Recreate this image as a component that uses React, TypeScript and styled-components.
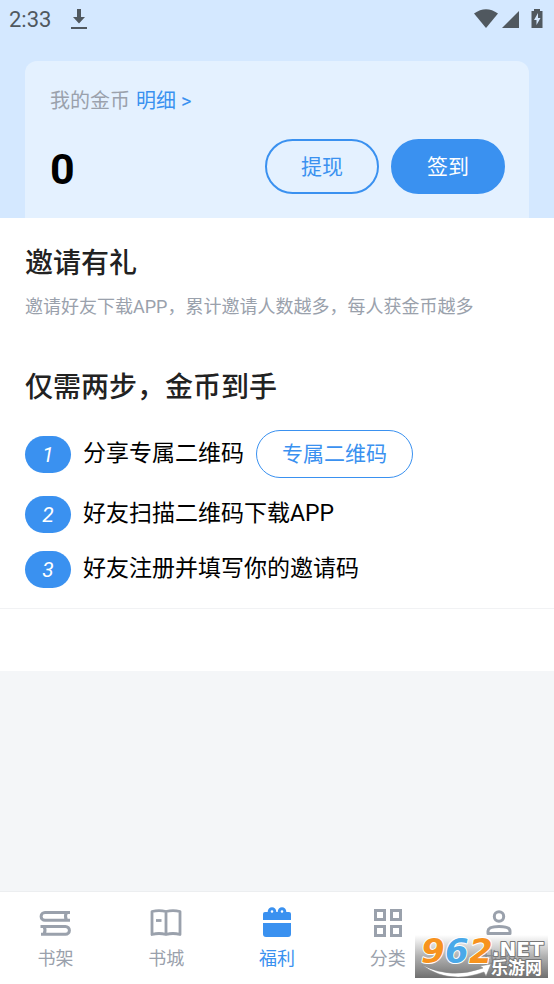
import React from "react";
import styled, { createGlobalStyle } from "styled-components";

const BLUE = "#3a91f0";
const GREY = "#9aa1ac";

const GlobalStyle = createGlobalStyle`
  * { box-sizing: border-box; }
  body {
    margin: 0;
    font-family: Roboto, "Noto Sans CJK SC", sans-serif;
    background: #f4f6f8;
  }
  button, a { font-family: inherit; }
  h1, h2, p, ol { margin: 0; padding: 0; }
`;

const Page = styled.div`
  display: flex;
  flex-direction: column;
  min-height: 100vh;
`;

const Header = styled.header`
  background: #d4e8ff;
`;

const StatusBar = styled.div`
  display: flex;
  align-items: center;
  height: 40px;
  padding: 0 8px 0 9px;
  color: #50585f;
`;

const Clock = styled.time`
  flex: 1;
  display: flex;
  align-items: center;
  gap: 20px;
  font-size: 22px;
  line-height: 40px;
`;

const StatusIcons = styled.div`
  display: flex;
  align-items: center;
`;

const CoinCard = styled.section`
  margin: 21px 25px 0;
  padding: 25px 24px 24px 25px;
  border-radius: 12px 12px 0 0;
  background: #e4f1ff;
`;

const CoinLabel = styled.p`
  display: flex;
  gap: 6px;
  font-size: 20px;
  line-height: 30px;
  color: ${GREY};
`;

const DetailLink = styled.a`
  color: ${BLUE};
  text-decoration: none;
`;

const BalanceRow = styled.div`
  display: flex;
  align-items: center;
  gap: 12px;
  margin-top: 23px;
`;

const Balance = styled.strong`
  flex: 1;
  padding-top: 6px;
  font-size: 43px;
  line-height: 49px;
  font-weight: 700;
  color: #000;
`;

const PillButton = styled.button<{ $filled?: boolean }>`
  width: 114px;
  height: 55px;
  padding: 0;
  border: 2px solid ${BLUE};
  border-radius: 28px;
  background: ${(p) => (p.$filled ? BLUE : "transparent")};
  color: ${(p) => (p.$filled ? "#fff" : BLUE)};
  font-size: 21px;
  line-height: 30px;
`;

const Invite = styled.main`
  padding: 26px 25px 20px;
  background: #fff;
  border-bottom: 1px solid #f1f2f4;
`;

const Title = styled.h2`
  font-size: 28px;
  line-height: 40px;
  font-weight: 500;
  color: #222;
`;

const Hint = styled.p`
  margin: 9px 0 47px;
  font-size: 18px;
  line-height: 28px;
  color: ${GREY};
`;

const Steps = styled.ol`
  display: flex;
  flex-direction: column;
  gap: 17px;
  margin-top: 22px;
  list-style: none;
`;

const Step = styled.li`
  display: flex;
  align-items: center;
  gap: 12px;
  min-height: 38px;
  font-size: 23px;
  line-height: 34px;
  color: #000;
`;

const StepNumber = styled.span`
  width: 46px;
  height: 37px;
  border-radius: 19px;
  background: ${BLUE};
  color: #fff;
  font-size: 21px;
  line-height: 38px;
  font-style: italic;
  text-align: center;
`;

const CodeButton = styled.button`
  height: 48px;
  padding: 0 25px;
  border: 1px solid ${BLUE};
  border-radius: 24px;
  background: #fff;
  color: ${BLUE};
  font-size: 21px;
  line-height: 30px;
`;

const BlankRow = styled.div`
  height: 62px;
  background: #fff;
`;

const Filler = styled.div`
  flex: 1;
`;

const TabBar = styled.nav`
  position: relative;
  display: grid;
  grid-template-columns: repeat(5, 1fr);
  height: 93px;
  border-top: 1px solid #eceef0;
  background: #fff;
`;

const Tab = styled.a<{ $active?: boolean }>`
  display: flex;
  flex-direction: column;
  align-items: center;
  gap: 7px;
  padding-top: 15px;
  color: ${(p) => (p.$active ? BLUE : GREY)};
  font-size: 18px;
  line-height: 26px;
  text-decoration: none;
`;

const Watermark = styled.div`
  position: absolute;
  right: 6px;
  bottom: 6px;
  width: 133px;
  height: 43px;

  svg {
    display: block;
    overflow: visible;
  }
`;

const MarkText = styled.text`
  paint-order: stroke;
  stroke-linejoin: round;
`;

function ShelfIcon() {
  return (
    <svg width="32" height="32" viewBox="0 0 32 32" fill="none" stroke="currentColor" strokeWidth="3">
      <path d="M31 5.500H6a3.900 3.900 0 0 0 0 7.800H31M27.500 5.500c-1.400 2.500-1.400 5.300 0 7.800" />
      <path d="M1.500 19.500H26.500a3.900 3.900 0 0 1 0 7.800H2M5 19.500c1.400 2.500 1.400 5.300 0 7.800" />
    </svg>
  );
}

function BookIcon() {
  return (
    <svg width="32" height="32" viewBox="0 0 32 32" fill="none" stroke="currentColor" strokeWidth="2.800" strokeLinejoin="round">
      <path d="M2 4.500Q9 2.800 16 4.500Q23 2.800 30 4.500V27.500Q23 25.500 16 27.500Q9 25.500 2 27.500ZM16 4.500V27.500" />
      <path d="M6 13.500H11.500" />
    </svg>
  );
}

function GiftIcon() {
  return (
    <svg width="32" height="32" viewBox="0 0 32 32">
      <path d="M2 13V7Q2 5 4 5H28Q30 5 30 7V13Z" fill="currentColor" />
      <path d="M2 16H30V27Q30 30 27 30H5Q2 30 2 27Z" fill="currentColor" />
      <circle cx="11" cy="4.500" r="2.800" fill="#fff" stroke="currentColor" strokeWidth="3" />
      <circle cx="21" cy="4.500" r="2.800" fill="#fff" stroke="currentColor" strokeWidth="3" />
    </svg>
  );
}

function GridIcon() {
  return (
    <svg width="32" height="32" viewBox="0 0 32 32" fill="none" stroke="currentColor" strokeWidth="3">
      <rect x="3.500" y="3.500" width="9" height="9" />
      <rect x="19.500" y="3.500" width="9" height="9" />
      <rect x="3.500" y="19.500" width="9" height="9" />
      <rect x="19.500" y="19.500" width="9" height="9" />
    </svg>
  );
}

function UserIcon() {
  return (
    <svg width="32" height="32" viewBox="0 0 32 32" fill="none" stroke="currentColor" strokeWidth="3" strokeLinejoin="round">
      <circle cx="16" cy="9.500" r="4.700" />
      <path d="M5 26.500V24Q5 19.500 16 19.500T27 24V26.500Z" />
    </svg>
  );
}

const tabs = [
  { label: "书架", Icon: ShelfIcon },
  { label: "书城", Icon: BookIcon },
  { label: "福利", Icon: GiftIcon, active: true },
  { label: "分类", Icon: GridIcon },
  { label: "我的", Icon: UserIcon },
];

function SiteMark() {
  return (
    <Watermark>
      <svg width="133" height="43" viewBox="0 0 133 43" role="img" aria-label="962.NET 乐游网">
        <defs>
          <linearGradient id="shade" x1="0" y1="0" x2="0" y2="1">
            <stop offset="0" stopColor="#808080" stopOpacity="0" />
            <stop offset="0.5" stopColor="#7c7c7c" stopOpacity="0.6" />
            <stop offset="1" stopColor="#6c6c6c" stopOpacity="0.98" />
          </linearGradient>
        </defs>
        <rect width="133" height="43" fill="url(#shade)" />
        <path d="M7 30Q36 45 68 33L65 31L76 29L71 41L69 37Q34 50 7 30Z" fill="#fff" stroke="#888" strokeWidth="0.500" />
        <g fontFamily="DejaVu Sans, sans-serif" fontWeight="700" fontStyle="italic" fontSize="34" stroke="#fff" strokeWidth="2">
          <MarkText x="6" y="28" fill="#f7931e">9</MarkText>
          <MarkText x="30" y="28" fill="#4aa9e9">6</MarkText>
          <MarkText x="54" y="28" fill="#f7931e">2</MarkText>
        </g>
        <MarkText x="77" y="21" fill="#fff" stroke="#777" strokeWidth="2" fontFamily="DejaVu Sans, sans-serif" fontWeight="700" fontSize="20">.NET</MarkText>
        <MarkText x="76" y="39" fill="#fff" stroke="#777" strokeWidth="2" fontFamily="Noto Sans CJK SC, sans-serif" fontWeight="700" fontSize="17">乐游网</MarkText>
      </svg>
    </Watermark>
  );
}

export default function App() {
  return (
    <Page>
      <GlobalStyle />
      <Header>
        <StatusBar>
          <Clock>
            2:33
            <svg width="16" height="22" viewBox="0 1 16 22" fill="currentColor">
              <path d="M6 1H10V9H14L8 15.500L2 9H6ZM0 19H16V21H0Z" />
            </svg>
          </Clock>
          <StatusIcons>
            <svg width="72" height="22" viewBox="0 1 72 22" fill="currentColor">
              <path d="M0 5.500Q12 -3 24 5.500L12 20Z" />
              <path d="M28 20L45 3V20Z" />
              <path fillRule="evenodd" d="M60 1H66V3H68.500V20H57.500V3H60ZM64 5L60 12H62.500V17L66.500 10H64Z" />
            </svg>
          </StatusIcons>
        </StatusBar>
        <CoinCard>
          <CoinLabel>
            我的金币 <DetailLink href="#detail">明细 &gt;</DetailLink>
          </CoinLabel>
          <BalanceRow>
            <Balance>0</Balance>
            <PillButton type="button">提现</PillButton>
            <PillButton type="button" $filled>签到</PillButton>
          </BalanceRow>
        </CoinCard>
      </Header>
      <Invite>
        <Title>邀请有礼</Title>
        <Hint>邀请好友下载APP，累计邀请人数越多，每人获金币越多</Hint>
        <Title>仅需两步，金币到手</Title>
        <Steps>
          <Step>
            <StepNumber>1</StepNumber>
            分享专属二维码
            <CodeButton type="button">专属二维码</CodeButton>
          </Step>
          <Step>
            <StepNumber>2</StepNumber>
            好友扫描二维码下载APP
          </Step>
          <Step>
            <StepNumber>3</StepNumber>
            好友注册并填写你的邀请码
          </Step>
        </Steps>
      </Invite>
      <BlankRow />
      <Filler />
      <TabBar>
        {tabs.map(({ label, Icon, active }) => (
          <Tab key={label} href="#" $active={active} aria-current={active ? "page" : undefined}>
            <Icon />
            {label}
          </Tab>
        ))}
        <SiteMark />
      </TabBar>
    </Page>
  );
}
